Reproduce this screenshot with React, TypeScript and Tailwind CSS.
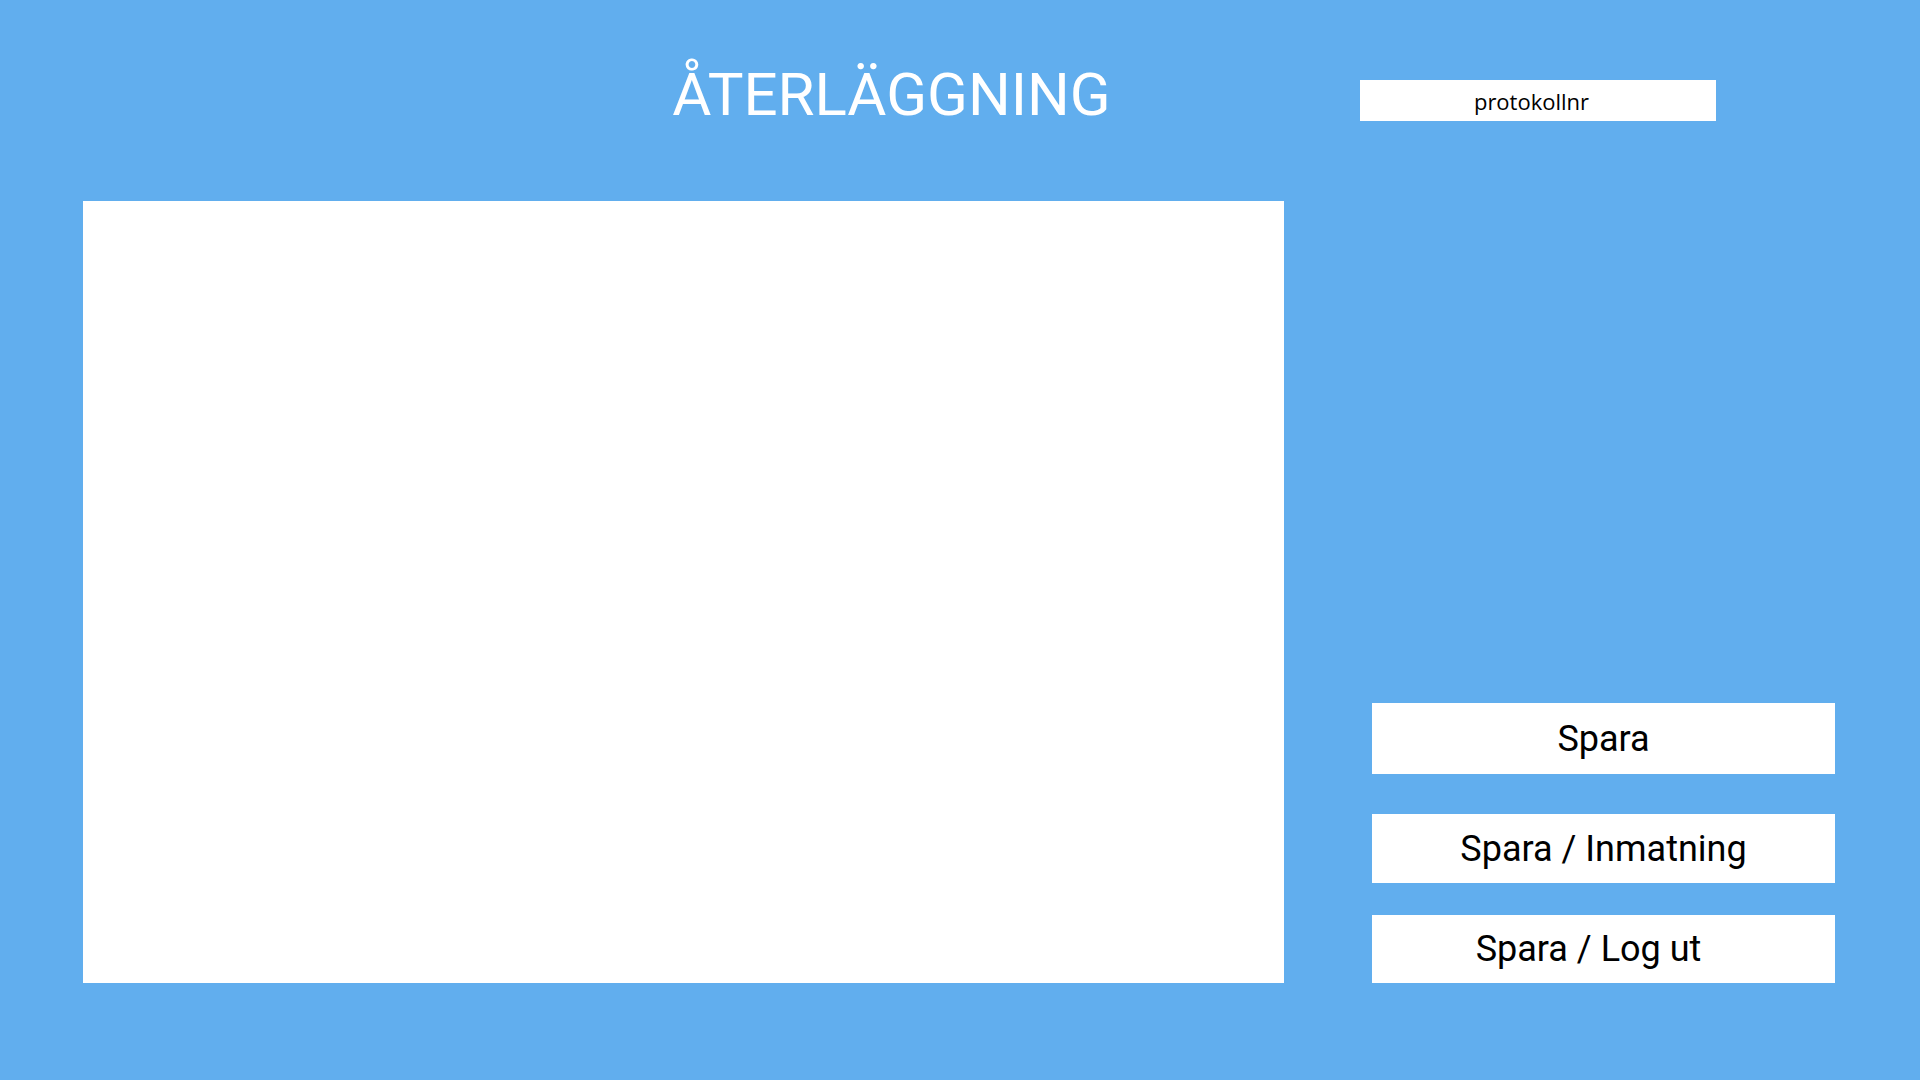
import React from "react";

export default function App() {
  return (
    <div className="w-[1920px] h-[1080px] bg-[#61aeee] font-['Roboto',sans-serif] overflow-hidden">
      <div className="flex h-[201px]">
        <div className="w-[1360px] pl-[423px] flex justify-center">
          <h1 className="pt-[60px] text-[60px] leading-[70px] text-white font-normal whitespace-nowrap">
            ÅTERLÄGGNING
          </h1>
        </div>
        <input
          readOnly
          value="protokollnr"
          className="mt-[80px] w-[356px] h-[41px] bg-white text-center text-[22px] text-black font-['Open_Sans',sans-serif] pr-[13px] outline-none border-0"
        />
      </div>
      <div className="flex pl-[83px]">
        <div className="w-[1201px] h-[782px] bg-white" />
        <div className="ml-[88px] w-[463px] flex flex-col justify-end">
          <button className="h-[71px] bg-white text-[36px] text-black">Spara</button>
          <button className="mt-[40px] h-[69px] bg-white text-[36px] text-black">Spara / Inmatning</button>
          <button className="mt-[32px] h-[68px] bg-white text-[36px] text-black pr-[30px]">Spara / Log ut</button>
        </div>
      </div>
    </div>
  );
}
